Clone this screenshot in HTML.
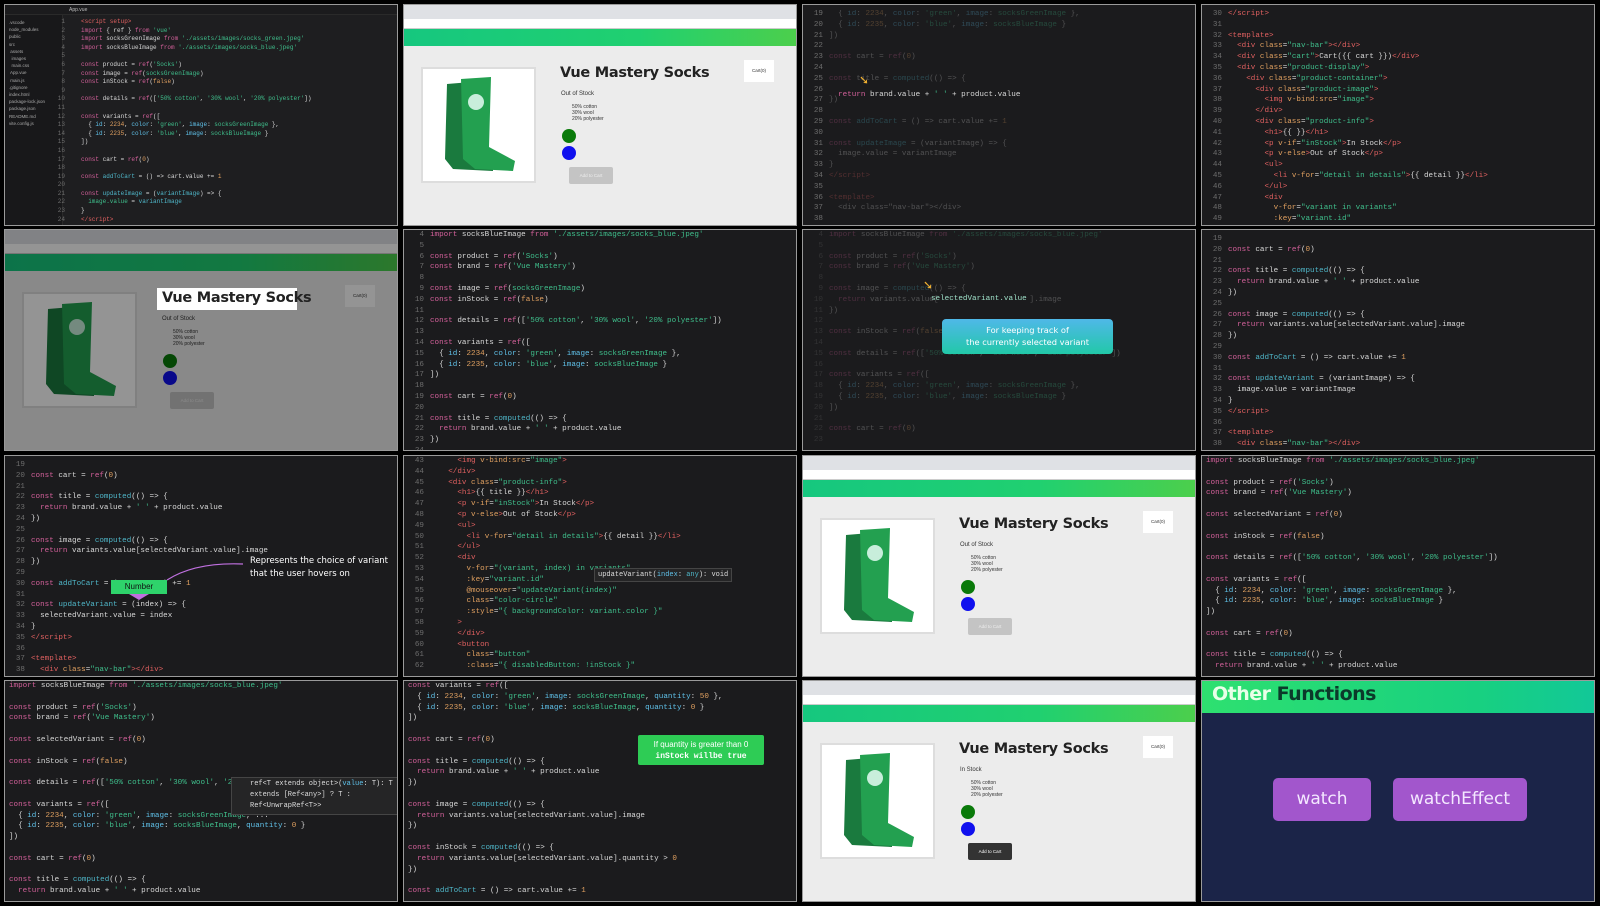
<!DOCTYPE html>
<html><head><meta charset="utf-8">
<style>
*{margin:0;padding:0;box-sizing:border-box}
body{width:1600px;height:906px;background:#000;position:relative;overflow:hidden;font-family:"Liberation Sans",sans-serif}
.c{position:absolute;width:394px;height:222px;border:1px solid #9a9a9a;overflow:hidden;background:#1b1b1d}
.ln,.cd{position:absolute;font-family:"Liberation Mono",monospace;font-size:7.6px;line-height:10.8px;white-space:pre;color:#d8d8d8}
.ln{color:#6d6d6d;text-align:right;width:20px}
.k{color:#d3609a}.s{color:#3fbf8c}.f{color:#4fb6c8}.n{color:#e0a060}.t{color:#e06060}.a{color:#5fc0e8}
.dim{opacity:.28}
.br{background:#ececec}
.tabs{position:absolute;left:0;top:0;width:100%;height:14px;background:#dfe1e5}
.addr{position:absolute;left:0;top:14px;width:100%;height:10px;background:#fff;border-bottom:1px solid #ccc}
.grn{position:absolute;left:0;top:24px;width:100%;height:17px;background:linear-gradient(90deg,#16c77f,#20d070 60%,#4ccf4c)}
.imgbox{position:absolute;left:17px;top:62px;width:115px;height:116px;border:2px solid #ddd;background:#fff}
.ttl{position:absolute;left:156px;top:60px;font-size:14.5px;font-weight:bold;color:#222;font-family:"DejaVu Sans",sans-serif;letter-spacing:-.3px}
.oos{position:absolute;left:157px;top:86px;font-size:6px;color:#333}
.det{position:absolute;left:168px;top:99px;font-size:5px;line-height:6px;color:#333}
.ci{position:absolute;left:158px;width:14px;height:14px;border-radius:50%}
.btn{position:absolute;left:165px;top:162px;width:44px;height:17px;background:#c4c4c4;border-radius:2px;font-size:4.5px;color:#eee;text-align:center;line-height:17px}
.cart{position:absolute;left:340px;top:55px;width:30px;height:22px;background:#fff;font-size:4.5px;text-align:center;line-height:22px;color:#333}
</style></head><body>

<!-- Row 1 -->
<div class="c" style="left:4px;top:4px;background:#1e1e20">
 <div style="position:absolute;left:0;top:0;width:58px;height:222px;background:#18181a;border-right:1px solid #2a2a2a;font-size:4.5px;line-height:7.2px;color:#aaa;padding:14px 0 0 4px;white-space:pre">.vscode
node_modules
public
src
 assets
  images
  main.css
 App.vue
 main.js
.gitignore
index.html
package-lock.json
package.json
README.md
vite.config.js</div>
 <div style="position:absolute;left:0;top:0;width:394px;height:10px;background:#1b1b1d;border-bottom:1px solid #2a2a2a;font-size:5px;color:#bbb;padding:2px 0 0 64px">App.vue</div>
 <div class="ln" style="left:40px;top:13px;font-size:6px;line-height:8.6px">1
2
3
4
5
6
7
8
9
10
11
12
13
14
15
16
17
18
19
20
21
22
23
24</div>
 <div class="cd" style="left:76px;top:13px;font-size:6px;line-height:8.6px"><span class="t">&lt;script setup&gt;</span>
<span class="k">import</span> { ref } <span class="k">from</span> <span class="s">'vue'</span>
<span class="k">import</span> socksGreenImage <span class="k">from</span> <span class="s">'./assets/images/socks_green.jpeg'</span>
<span class="k">import</span> socksBlueImage <span class="k">from</span> <span class="s">'./assets/images/socks_blue.jpeg'</span>

<span class="k">const</span> product = <span class="k">ref</span>(<span class="s">'Socks'</span>)
<span class="k">const</span> image = <span class="k">ref</span>(<span class="s">socksGreenImage</span>)
<span class="k">const</span> inStock = <span class="k">ref</span>(<span class="n">false</span>)

<span class="k">const</span> details = <span class="k">ref</span>([<span class="s">'50% cotton'</span>, <span class="s">'30% wool'</span>, <span class="s">'20% polyester'</span>])

<span class="k">const</span> variants = <span class="k">ref</span>([
  { <span class="a">id</span>: <span class="n">2234</span>, <span class="a">color</span>: <span class="s">'green'</span>, <span class="a">image</span>: <span class="s">socksGreenImage</span> },
  { <span class="a">id</span>: <span class="n">2235</span>, <span class="a">color</span>: <span class="s">'blue'</span>, <span class="a">image</span>: <span class="s">socksBlueImage</span> }
])

<span class="k">const</span> cart = <span class="k">ref</span>(<span class="n">0</span>)

<span class="k">const</span> <span class="f">addToCart</span> = () =&gt; cart.value += <span class="n">1</span>

<span class="k">const</span> <span class="f">updateImage</span> = (<span class="f">variantImage</span>) =&gt; {
  <span class="s">image.value</span> = <span class="f">variantImage</span>
}
<span class="t">&lt;/script&gt;</span></div>
</div>

<div class="c br" style="left:403px;top:4px">
 <div class="tabs"></div><div class="addr"></div><div class="grn"></div>
 <div class="imgbox"><svg width="111" height="112" viewBox="0 0 111 112"><path d="M24 15 L48 13 L48 80 L70 95 L70 102 L30 100 L22 90 Z" fill="#1a7a3e"/><path d="M38 10 L68 8 L66 78 L92 92 L90 102 L52 100 L40 90 Z" fill="#23a050"/><circle cx="53" cy="33" r="8" fill="#c8eedb"/></svg></div>
 <div class="ttl">Vue Mastery Socks</div><div class="oos">Out of Stock</div>
 <div class="det">50% cotton<br>30% wool<br>20% polyester</div>
 <div class="ci" style="top:124px;background:#0a7a0a"></div><div class="ci" style="top:141px;background:#1010ee"></div>
 <div class="btn">Add to Cart</div><div class="cart">Cart(0)</div>
</div>

<div class="c" style="left:802px;top:4px">
 <div class="ln" style="left:0;top:4px">19
20
21
22
23
24
25
26
27
28
29
30
31
32
33
34
35
36
37
38</div>
 <div class="cd dim" style="left:26px;top:4px">  { <span class="a">id</span>: <span class="n">2234</span>, <span class="a">color</span>: <span class="s">'green'</span>, <span class="a">image</span>: <span class="s">socksGreenImage</span> },
  { <span class="a">id</span>: <span class="n">2235</span>, <span class="a">color</span>: <span class="s">'blue'</span>, <span class="a">image</span>: <span class="s">socksBlueImage</span> }
])

<span class="k">const</span> cart = <span class="k">ref</span>(<span class="n">0</span>)

<span class="k">const</span> title = <span class="f">computed</span>(() =&gt; {

})

<span class="k">const</span> <span class="f">addToCart</span> = () =&gt; cart.value += <span class="n">1</span>

<span class="k">const</span> <span class="f">updateImage</span> = (variantImage) =&gt; {
  image.value = variantImage
}
<span class="t">&lt;/script&gt;</span>

<span class="t">&lt;template&gt;</span>
  &lt;div class="nav-bar"&gt;&lt;/div&gt;</div>
 <div class="cd" style="left:26px;top:85px">  <span class="k">return</span> brand.value + <span class="s">' '</span> + product.value</div>
 <div style="position:absolute;left:56px;top:68px;color:#f0b030;font-size:12px">➘</div>
</div>

<div class="c" style="left:1201px;top:4px">
 <div class="ln" style="left:0;top:4px">30
31
32
33
34
35
36
37
38
39
40
41
42
43
44
45
46
47
48
49</div>
 <div class="cd" style="left:26px;top:4px"><span class="t">&lt;/script&gt;</span>

<span class="t">&lt;template&gt;</span>
  <span class="t">&lt;div</span> <span class="n">class</span>=<span class="s">"nav-bar"</span><span class="t">&gt;&lt;/div&gt;</span>
  <span class="t">&lt;div</span> <span class="n">class</span>=<span class="s">"cart"</span><span class="t">&gt;</span>Cart({{ cart }})<span class="t">&lt;/div&gt;</span>
  <span class="t">&lt;div</span> <span class="n">class</span>=<span class="s">"product-display"</span><span class="t">&gt;</span>
    <span class="t">&lt;div</span> <span class="n">class</span>=<span class="s">"product-container"</span><span class="t">&gt;</span>
      <span class="t">&lt;div</span> <span class="n">class</span>=<span class="s">"product-image"</span><span class="t">&gt;</span>
        <span class="t">&lt;img</span> <span class="n">v-bind:src</span>=<span class="s">"image"</span><span class="t">&gt;</span>
      <span class="t">&lt;/div&gt;</span>
      <span class="t">&lt;div</span> <span class="n">class</span>=<span class="s">"product-info"</span><span class="t">&gt;</span>
        <span class="t">&lt;h1&gt;</span>{{ }}<span class="t">&lt;/h1&gt;</span>
        <span class="t">&lt;p</span> <span class="n">v-if</span>=<span class="s">"inStock"</span><span class="t">&gt;</span>In Stock<span class="t">&lt;/p&gt;</span>
        <span class="t">&lt;p</span> <span class="n">v-else</span><span class="t">&gt;</span>Out of Stock<span class="t">&lt;/p&gt;</span>
        <span class="t">&lt;ul&gt;</span>
          <span class="t">&lt;li</span> <span class="n">v-for</span>=<span class="s">"detail in details"</span><span class="t">&gt;</span>{{ detail }}<span class="t">&lt;/li&gt;</span>
        <span class="t">&lt;/ul&gt;</span>
        <span class="t">&lt;div</span>
          <span class="n">v-for</span>=<span class="s">"variant in variants"</span>
          <span class="n">:key</span>=<span class="s">"variant.id"</span></div>
</div>

<!-- Row 2 -->
<div class="c br" style="left:4px;top:229px">
 <div class="tabs"></div><div class="addr"></div><div class="grn"></div>
 <div class="imgbox"><svg width="111" height="112" viewBox="0 0 111 112"><path d="M24 15 L48 13 L48 80 L70 95 L70 102 L30 100 L22 90 Z" fill="#1a7a3e"/><path d="M38 10 L68 8 L66 78 L92 92 L90 102 L52 100 L40 90 Z" fill="#23a050"/><circle cx="53" cy="33" r="8" fill="#c8eedb"/></svg></div>
 <div class="oos">Out of Stock</div>
 <div class="det">50% cotton<br>30% wool<br>20% polyester</div>
 <div class="ci" style="top:124px;background:#0a7a0a"></div><div class="ci" style="top:141px;background:#1010ee"></div>
 <div class="btn">Add to Cart</div><div class="cart">Cart(0)</div>
 <div style="position:absolute;left:0;top:0;width:100%;height:100%;background:rgba(0,0,0,.42)"></div>
 <div style="position:absolute;left:152px;top:58px;width:140px;height:22px;background:#fff"></div>
 <div class="ttl" style="top:60px;left:157px">Vue Mastery Socks</div>
</div>

<div class="c" style="left:403px;top:229px">
 <div class="ln" style="left:0;top:0">4
5
6
7
8
9
10
11
12
13
14
15
16
17
18
19
20
21
22
23
24</div>
 <div class="cd" style="left:26px;top:0"><span class="k">import</span> socksBlueImage <span class="k">from</span> <span class="s">'./assets/images/socks_blue.jpeg'</span>

<span class="k">const</span> product = <span class="k">ref</span>(<span class="s">'Socks'</span>)
<span class="k">const</span> brand = <span class="k">ref</span>(<span class="s">'Vue Mastery'</span>)

<span class="k">const</span> image = <span class="k">ref</span>(<span class="s">socksGreenImage</span>)
<span class="k">const</span> inStock = <span class="k">ref</span>(<span class="n">false</span>)

<span class="k">const</span> details = <span class="k">ref</span>([<span class="s">'50% cotton'</span>, <span class="s">'30% wool'</span>, <span class="s">'20% polyester'</span>])

<span class="k">const</span> variants = <span class="k">ref</span>([
  { <span class="a">id</span>: <span class="n">2234</span>, <span class="a">color</span>: <span class="s">'green'</span>, <span class="a">image</span>: <span class="s">socksGreenImage</span> },
  { <span class="a">id</span>: <span class="n">2235</span>, <span class="a">color</span>: <span class="s">'blue'</span>, <span class="a">image</span>: <span class="s">socksBlueImage</span> }
])

<span class="k">const</span> cart = <span class="k">ref</span>(<span class="n">0</span>)

<span class="k">const</span> title = <span class="f">computed</span>(() =&gt; {
  <span class="k">return</span> brand.value + <span class="s">' '</span> + product.value
})</div>
</div>

<div class="c" style="left:802px;top:229px">
 <div class="ln dim" style="left:0;top:0">4
5
6
7
8
9
10
11
12
13
14
15
16
17
18
19
20
21
22
23</div>
 <div class="cd dim" style="left:26px;top:0"><span class="k">import</span> socksBlueImage <span class="k">from</span> <span class="s">'./assets/images/socks_blue.jpeg'</span>

<span class="k">const</span> product = <span class="k">ref</span>(<span class="s">'Socks'</span>)
<span class="k">const</span> brand = <span class="k">ref</span>(<span class="s">'Vue Mastery'</span>)

<span class="k">const</span> image = <span class="f">computed</span>(() =&gt; {
  <span class="k">return</span> variants.value[                    ].image
})

<span class="k">const</span> inStock = <span class="k">ref</span>(<span class="n">false</span>)

<span class="k">const</span> details = <span class="k">ref</span>([<span class="s">'50% cotton'</span>, <span class="s">'30% wool'</span>, <span class="s">'20% polyester'</span>])

<span class="k">const</span> variants = <span class="k">ref</span>([
  { <span class="a">id</span>: <span class="n">2234</span>, <span class="a">color</span>: <span class="s">'green'</span>, <span class="a">image</span>: <span class="s">socksGreenImage</span> },
  { <span class="a">id</span>: <span class="n">2235</span>, <span class="a">color</span>: <span class="s">'blue'</span>, <span class="a">image</span>: <span class="s">socksBlueImage</span> }
])

<span class="k">const</span> cart = <span class="k">ref</span>(<span class="n">0</span>)</div>
 <div class="cd" style="left:128px;top:64px;color:#9fe0c8">selectedVariant.value</div>
 <div style="position:absolute;left:120px;top:48px;color:#f0b030;font-size:12px">➘</div>
 <div style="position:absolute;left:139px;top:89px;width:171px;height:35px;border-radius:4px;background:linear-gradient(180deg,#4fb8e8,#22c8a8);color:#fff;font-family:'DejaVu Sans',sans-serif;font-size:8.3px;line-height:12px;text-align:center;padding-top:5px">For keeping track of<br>the currently selected variant</div>
</div>

<div class="c" style="left:1201px;top:229px">
 <div class="ln" style="left:0;top:4px">19
20
21
22
23
24
25
26
27
28
29
30
31
32
33
34
35
36
37
38</div>
 <div class="cd" style="left:26px;top:4px">
<span class="k">const</span> cart = <span class="k">ref</span>(<span class="n">0</span>)

<span class="k">const</span> title = <span class="f">computed</span>(() =&gt; {
  <span class="k">return</span> brand.value + <span class="s">' '</span> + product.value
})

<span class="k">const</span> image = <span class="f">computed</span>(() =&gt; {
  <span class="k">return</span> variants.value[selectedVariant.value].image
})

<span class="k">const</span> <span class="f">addToCart</span> = () =&gt; cart.value += <span class="n">1</span>

<span class="k">const</span> <span class="f">updateVariant</span> = (variantImage) =&gt; {
  image.value = variantImage
}
<span class="t">&lt;/script&gt;</span>

<span class="t">&lt;template&gt;</span>
  <span class="t">&lt;div</span> <span class="n">class</span>=<span class="s">"nav-bar"</span><span class="t">&gt;&lt;/div&gt;</span></div>
</div>

<!-- Row 3 -->
<div class="c" style="left:4px;top:455px">
 <div class="ln" style="left:0;top:4px">19
20
21
22
23
24
25
26
27
28
29
30
31
32
33
34
35
36
37
38</div>
 <div class="cd" style="left:26px;top:4px">
<span class="k">const</span> cart = <span class="k">ref</span>(<span class="n">0</span>)

<span class="k">const</span> title = <span class="f">computed</span>(() =&gt; {
  <span class="k">return</span> brand.value + <span class="s">' '</span> + product.value
})

<span class="k">const</span> image = <span class="f">computed</span>(() =&gt; {
  <span class="k">return</span> variants.value[selectedVariant.value].image
})

<span class="k">const</span> <span class="f">addToCart</span> = (          ) += <span class="n">1</span>

<span class="k">const</span> <span class="f">updateVariant</span> = (index) =&gt; {
  selectedVariant.value = index
}
<span class="t">&lt;/script&gt;</span>

<span class="t">&lt;template&gt;</span>
  <span class="t">&lt;div</span> <span class="n">class</span>=<span class="s">"nav-bar"</span><span class="t">&gt;&lt;/div&gt;</span></div>
 <div style="position:absolute;left:106px;top:124px;width:56px;height:14px;background:#2ed36b;color:#111;font-size:8px;text-align:center;line-height:14px">Number</div>
 <div style="position:absolute;left:124px;top:138px;width:0;height:0;border-left:10px solid transparent;border-right:10px solid transparent;border-top:6px solid #c070e0"></div>
 <svg style="position:absolute;left:160px;top:100px" width="90" height="30"><path d="M2 24 Q30 6 78 8" stroke="#c070e0" stroke-width="1.2" fill="none"/></svg>
 <div style="position:absolute;left:245px;top:99px;color:#fff;font-size:8.5px;line-height:13px;font-family:'DejaVu Sans',sans-serif">Represents the choice of variant<br>that the user hovers on</div>
</div>

<div class="c" style="left:403px;top:455px">
 <div class="ln" style="left:0;top:0">43
44
45
46
47
48
49
50
51
52
53
54
55
56
57
58
59
60
61
62</div>
 <div class="cd" style="left:26px;top:0">      <span class="t">&lt;img</span> <span class="n">v-bind:src</span>=<span class="s">"image"</span><span class="t">&gt;</span>
    <span class="t">&lt;/div&gt;</span>
    <span class="t">&lt;div</span> <span class="n">class</span>=<span class="s">"product-info"</span><span class="t">&gt;</span>
      <span class="t">&lt;h1&gt;</span>{{ title }}<span class="t">&lt;/h1&gt;</span>
      <span class="t">&lt;p</span> <span class="n">v-if</span>=<span class="s">"inStock"</span><span class="t">&gt;</span>In Stock<span class="t">&lt;/p&gt;</span>
      <span class="t">&lt;p</span> <span class="n">v-else</span><span class="t">&gt;</span>Out of Stock<span class="t">&lt;/p&gt;</span>
      <span class="t">&lt;ul&gt;</span>
        <span class="t">&lt;li</span> <span class="n">v-for</span>=<span class="s">"detail in details"</span><span class="t">&gt;</span>{{ detail }}<span class="t">&lt;/li&gt;</span>
      <span class="t">&lt;/ul&gt;</span>
      <span class="t">&lt;div</span>
        <span class="n">v-for</span>=<span class="s">"(variant, index) in variants"</span>
        <span class="n">:key</span>=<span class="s">"variant.id"</span>
        <span class="n">@mouseover</span>=<span class="s">"updateVariant(index)"</span>
        <span class="n">class</span>=<span class="s">"color-circle"</span>
        <span class="n">:style</span>=<span class="s">"{ backgroundColor: variant.color }"</span>
      <span class="t">&gt;</span>
      <span class="t">&lt;/div&gt;</span>
      <span class="t">&lt;button</span>
        <span class="n">class</span>=<span class="s">"button"</span>
        <span class="n">:class</span>=<span class="s">"{ disabledButton: !inStock }"</span></div>
 <div style="position:absolute;left:190px;top:112px;background:#252526;border:1px solid #454545;font-family:'Liberation Mono',monospace;font-size:7px;color:#ddd;padding:2px 3px">updateVariant(<span class="a">index</span>: <span class="f">any</span>): void</div>
</div>

<div class="c br" style="left:802px;top:455px">
 <div class="tabs"></div><div class="addr"></div><div class="grn"></div>
 <div class="imgbox"><svg width="111" height="112" viewBox="0 0 111 112"><path d="M24 15 L48 13 L48 80 L70 95 L70 102 L30 100 L22 90 Z" fill="#1a7a3e"/><path d="M38 10 L68 8 L66 78 L92 92 L90 102 L52 100 L40 90 Z" fill="#23a050"/><circle cx="53" cy="33" r="8" fill="#c8eedb"/></svg></div>
 <div class="ttl">Vue Mastery Socks</div><div class="oos">Out of Stock</div>
 <div class="det">50% cotton<br>30% wool<br>20% polyester</div>
 <div class="ci" style="top:124px;background:#0a7a0a"></div><div class="ci" style="top:141px;background:#1010ee"></div>
 <div class="btn">Add to Cart</div><div class="cart">Cart(0)</div>
</div>

<div class="c" style="left:1201px;top:455px">
 <div class="cd" style="left:4px;top:0"><span class="k">import</span> socksBlueImage <span class="k">from</span> <span class="s">'./assets/images/socks_blue.jpeg'</span>

<span class="k">const</span> product = <span class="k">ref</span>(<span class="s">'Socks'</span>)
<span class="k">const</span> brand = <span class="k">ref</span>(<span class="s">'Vue Mastery'</span>)

<span class="k">const</span> selectedVariant = <span class="k">ref</span>(<span class="n">0</span>)

<span class="k">const</span> inStock = <span class="k">ref</span>(<span class="n">false</span>)

<span class="k">const</span> details = <span class="k">ref</span>([<span class="s">'50% cotton'</span>, <span class="s">'30% wool'</span>, <span class="s">'20% polyester'</span>])

<span class="k">const</span> variants = <span class="k">ref</span>([
  { <span class="a">id</span>: <span class="n">2234</span>, <span class="a">color</span>: <span class="s">'green'</span>, <span class="a">image</span>: <span class="s">socksGreenImage</span> },
  { <span class="a">id</span>: <span class="n">2235</span>, <span class="a">color</span>: <span class="s">'blue'</span>, <span class="a">image</span>: <span class="s">socksBlueImage</span> }
])

<span class="k">const</span> cart = <span class="k">ref</span>(<span class="n">0</span>)

<span class="k">const</span> title = <span class="f">computed</span>(() =&gt; {
  <span class="k">return</span> brand.value + <span class="s">' '</span> + product.value</div>
</div>

<!-- Row 4 -->
<div class="c" style="left:4px;top:680px">
 <div class="cd" style="left:4px;top:0"><span class="k">import</span> socksBlueImage <span class="k">from</span> <span class="s">'./assets/images/socks_blue.jpeg'</span>

<span class="k">const</span> product = <span class="k">ref</span>(<span class="s">'Socks'</span>)
<span class="k">const</span> brand = <span class="k">ref</span>(<span class="s">'Vue Mastery'</span>)

<span class="k">const</span> selectedVariant = <span class="k">ref</span>(<span class="n">0</span>)

<span class="k">const</span> inStock = <span class="k">ref</span>(<span class="n">false</span>)

<span class="k">const</span> details = <span class="k">ref</span>([<span class="s">'50% cotton'</span>, <span class="s">'30% wool'</span>, <span class="s">'20% polyester'</span>])

<span class="k">const</span> variants = <span class="k">ref</span>([
  { <span class="a">id</span>: <span class="n">2234</span>, <span class="a">color</span>: <span class="s">'green'</span>, <span class="a">image</span>: <span class="s">socksGreenImage</span>, ...
  { <span class="a">id</span>: <span class="n">2235</span>, <span class="a">color</span>: <span class="s">'blue'</span>, <span class="a">image</span>: <span class="s">socksBlueImage</span>, <span class="a">quantity</span>: <span class="n">0</span> }
])

<span class="k">const</span> cart = <span class="k">ref</span>(<span class="n">0</span>)

<span class="k">const</span> title = <span class="f">computed</span>(() =&gt; {
  <span class="k">return</span> brand.value + <span class="s">' '</span> + product.value</div>
 <div style="position:absolute;left:226px;top:96px;width:170px;height:38px;background:#252526;border:1px solid #454545;font-family:'Liberation Mono',monospace;font-size:7px;line-height:11px;color:#ddd;padding:1px 3px 0 18px;white-space:pre">ref&lt;T extends object&gt;(<span class="a">value</span>: T): T
extends [Ref&lt;any&gt;] ? T :
Ref&lt;UnwrapRef&lt;T&gt;&gt;</div>
</div>

<div class="c" style="left:403px;top:680px">
 <div class="cd" style="left:4px;top:0"><span class="k">const</span> variants = <span class="k">ref</span>([
  { <span class="a">id</span>: <span class="n">2234</span>, <span class="a">color</span>: <span class="s">'green'</span>, <span class="a">image</span>: <span class="s">socksGreenImage</span>, <span class="a">quantity</span>: <span class="n">50</span> },
  { <span class="a">id</span>: <span class="n">2235</span>, <span class="a">color</span>: <span class="s">'blue'</span>, <span class="a">image</span>: <span class="s">socksBlueImage</span>, <span class="a">quantity</span>: <span class="n">0</span> }
])

<span class="k">const</span> cart = <span class="k">ref</span>(<span class="n">0</span>)

<span class="k">const</span> title = <span class="f">computed</span>(() =&gt; {
  <span class="k">return</span> brand.value + <span class="s">' '</span> + product.value
})

<span class="k">const</span> image = <span class="f">computed</span>(() =&gt; {
  <span class="k">return</span> variants.value[selectedVariant.value].image
})

<span class="k">const</span> inStock = <span class="f">computed</span>(() =&gt; {
  <span class="k">return</span> variants.value[selectedVariant.value].quantity &gt; <span class="n">0</span>
})

<span class="k">const</span> <span class="f">addToCart</span> = () =&gt; cart.value += <span class="n">1</span></div>
 <div style="position:absolute;left:234px;top:54px;width:126px;height:30px;background:#2ecc55;border-radius:2px;color:#fff;font-size:8px;line-height:11px;text-align:center;padding-top:4px">If quantity is greater than 0<br><b style="font-family:'Liberation Mono',monospace">inStock willbe true</b></div>
</div>

<div class="c br" style="left:802px;top:680px">
 <div class="tabs"></div><div class="addr"></div><div class="grn"></div>
 <div class="imgbox"><svg width="111" height="112" viewBox="0 0 111 112"><path d="M24 15 L48 13 L48 80 L70 95 L70 102 L30 100 L22 90 Z" fill="#1a7a3e"/><path d="M38 10 L68 8 L66 78 L92 92 L90 102 L52 100 L40 90 Z" fill="#23a050"/><circle cx="53" cy="33" r="8" fill="#c8eedb"/></svg></div>
 <div class="ttl">Vue Mastery Socks</div><div class="oos">In Stock</div>
 <div class="det">50% cotton<br>30% wool<br>20% polyester</div>
 <div class="ci" style="top:124px;background:#0a7a0a"></div><div class="ci" style="top:141px;background:#1010ee"></div>
 <div class="btn" style="background:#333;color:#fff">Add to Cart</div><div class="cart">Cart(0)</div>
</div>

<div class="c" style="left:1201px;top:680px;background:#1b2448">
 <div style="position:absolute;left:0;top:0;width:100%;height:32px;background:linear-gradient(90deg,#2ee070,#18d080 70%,#12c898)"></div>
 <div style="position:absolute;left:10px;top:2px;font-family:'DejaVu Sans',sans-serif;font-weight:bold;font-size:19px;color:#e8ffe8;letter-spacing:-.5px">Other <span style="color:#0b3a2a">Functions</span></div>
 <div style="position:absolute;left:71px;top:97px;width:98px;height:43px;background:#a256cc;border-radius:5px;color:#f4e8ff;font-family:'DejaVu Sans',sans-serif;font-size:17px;text-align:center;line-height:43px">watch</div>
 <div style="position:absolute;left:191px;top:97px;width:134px;height:43px;background:#a256cc;border-radius:5px;color:#f4e8ff;font-family:'DejaVu Sans',sans-serif;font-size:17px;text-align:center;line-height:43px">watchEffect</div>
</div>

</body></html>
